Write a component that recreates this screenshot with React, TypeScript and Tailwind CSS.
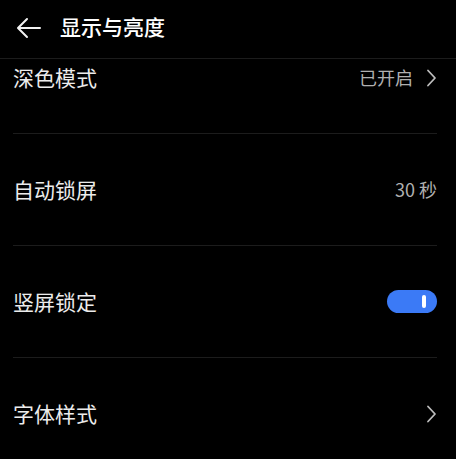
import React from "react";

const font = { fontFamily: '"Noto Sans CJK SC", "Noto Sans", sans-serif' };

function Chevron() {
  return (
    <svg width="11" height="18" viewBox="0 0 11 18" fill="none" className="ml-[13px]">
      <path d="M2 1.5 L9 9 L2 16.5" stroke="#bdbdbd" strokeWidth="1.8" strokeLinecap="round" strokeLinejoin="round" />
    </svg>
  );
}

function Row({ label, right, last }: { label: string; right?: React.ReactNode; last?: boolean }) {
  return (
    <div className={`ml-[13px] mr-[19px] h-[112px] flex items-center justify-between ${last ? "" : "border-b border-[#1c1c1c]"}`}>
      <span className="text-[21px] text-[#ececec]">{label}</span>
      <div className="flex items-center">{right}</div>
    </div>
  );
}

export default function App() {
  return (
    <div className="w-[456px] h-[459px] bg-black overflow-hidden flex flex-col" style={font}>
      <div className="h-[59px] shrink-0 border-b border-[#1c1c1c] flex items-center relative z-10 bg-black">
        <svg width="26" height="22" viewBox="0 0 26 22" fill="none" className="ml-[16px] mt-[-3px]">
          <path d="M24 11 H2.5 M11 2 L2 11 L11 20" stroke="#f2f2f2" strokeWidth="2" strokeLinecap="round" strokeLinejoin="round" />
        </svg>
        <span className="ml-[18px] mt-[-4px] text-[21px] font-medium text-white">显示与亮度</span>
      </div>
      <div className="flex-1 overflow-hidden">
        <div className="-mt-[37px]">
          <Row
            label="深色模式"
            right={
              <>
                <span className="text-[18px] text-[#b0b0b0]">已开启</span>
                <Chevron />
              </>
            }
          />
          <Row label="自动锁屏" right={<span className="text-[18px] text-[#b0b0b0]">30 秒</span>} />
          <Row
            label="竖屏锁定"
            right={
              <div className="w-[50px] h-[23px] rounded-full bg-[#3b7af6] flex items-center justify-end pr-[11px]">
                <div className="w-[4px] h-[13px] rounded-full bg-white" />
              </div>
            }
          />
          <Row label="字体样式" right={<Chevron />} last />
        </div>
      </div>
    </div>
  );
}
